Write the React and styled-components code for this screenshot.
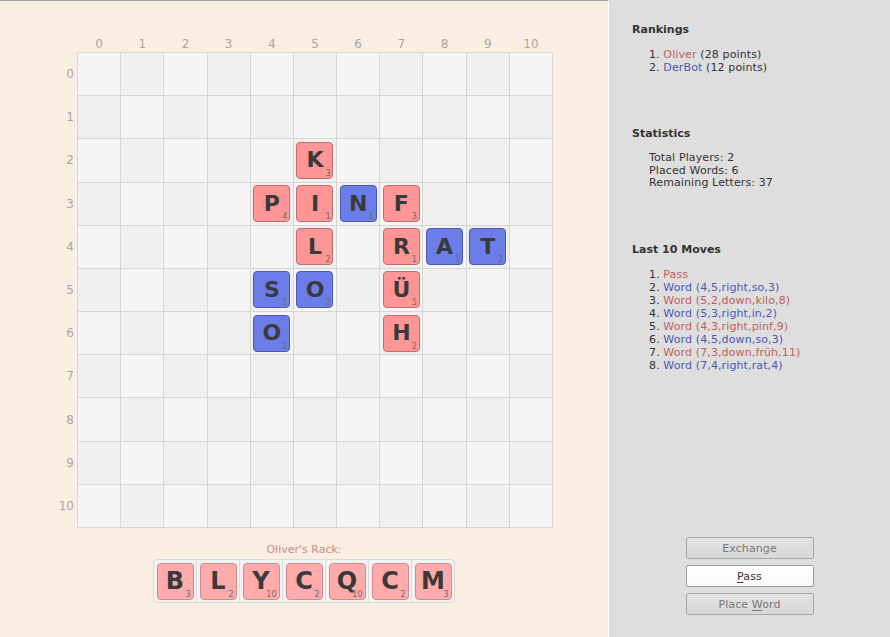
import React from 'react'
import styled, { createGlobalStyle } from 'styled-components'

const GlobalStyle = createGlobalStyle`
  html, body {
    margin: 0;
    padding: 0;
  }
  body {
    font-family: "DejaVu Sans", "Noto Sans", sans-serif;
    font-size: 11px;
    color: #333;
  }
`;

const RED = '#c0605f';
const BLUE = '#4a58b8';

const Window = styled.div`
  display: flex;
  width: 890px;
  height: 637px;
  overflow: hidden;
`;

const GamePanel = styled.div`
  width: 609px;
  box-sizing: border-box;
  background: #faede2;
  border-top: 1px solid #a2a2a2;
  border-right: 1px solid #ffffff;
  padding: 35px 0 0 53px;
  display: flex;
  flex-direction: column;
`;

const BoardFrame = styled.div`
  display: grid;
  grid-template-columns: 24px 476px;
  grid-template-rows: 16px 476px;
`;

const ColLabels = styled.div`
  grid-column: 2;
  display: grid;
  grid-template-columns: repeat(11, 1fr);
  padding: 0 1px;
  gap: 1px;
`;

const AxisLabel = styled.span`
  font-size: 12px;
  line-height: 16px;
  color: #aca59e;
  padding-right: ${p => (p.$row ? '3px' : '0')};
  display: flex;
  align-items: center;
  justify-content: ${p => (p.$row ? 'flex-end' : 'center')};
`;

const RowLabels = styled.div`
  grid-column: 1;
  display: grid;
  grid-template-rows: repeat(11, 1fr);
  padding: 1px 0;
  gap: 1px;
`;

const Board = styled.div`
  display: grid;
  grid-template-columns: repeat(11, 1fr);
  grid-template-rows: repeat(11, 1fr);
  gap: 1px;
  padding: 1px;
  background: #d6d6d6;
`;

const Cell = styled.div`
  background: ${p => (p.$dark ? '#f0f0f0' : '#f5f5f5')};
  display: flex;
  align-items: center;
  justify-content: center;
`;

const Tile = styled.div`
  position: relative;
  width: 37px;
  height: 37px;
  box-sizing: border-box;
  border-radius: 4px;
  border: 1px solid ${p => p.$edge};
  background: ${p => p.$fill};
  display: flex;
  align-items: center;
  justify-content: center;
  font-weight: bold;
  font-size: ${p => p.$size}px;
  color: #3a3a3a;
  padding-bottom: 1px;
`;

const TileValue = styled.span`
  position: absolute;
  right: 2px;
  bottom: 0px;
  font-size: 8px;
  font-weight: normal;
  line-height: 9px;
  color: #6a6a6a;
`;

const RackArea = styled.div`
  margin-left: -53px;
  display: flex;
  flex-direction: column;
  align-items: center;
`;

const RackTitle = styled.div`
  margin-top: 15px;
  font-size: 11px;
  line-height: 14px;
  color: #c98a8a;
`;

const Rack = styled.div`
  margin-top: 2px;
  display: flex;
  background: #f3f3f3;
  border: 1px solid #dadada;
  border-radius: 4px;
`;

const RackSlot = styled.div`
  width: 42px;
  height: 42px;
  display: flex;
  align-items: center;
  justify-content: center;
  & + & {
    border-left: 1px solid #dcdcdc;
  }
`;

const SidePanel = styled.div`
  flex: 1;
  background: #dedede;
  padding: 23px 0 22px 23px;
  display: flex;
  flex-direction: column;
  letter-spacing: 0.12px;
`;

const Section = styled.section`
  & + & {
    margin-top: 53px;
  }
`;

const Heading = styled.h3`
  margin: 0 0 11px;
  font-size: 11px;
  line-height: 14px;
  font-weight: bold;
  color: #333;
  letter-spacing: 0;
`;

const List = styled.div`
  padding-left: 17px;
  line-height: ${p => p.$lh}px;
`;

const Colored = styled.span`
  color: ${p => p.$color};
`;

const Buttons = styled.div`
  margin-top: auto;
  margin-left: -23px;
  display: flex;
  flex-direction: column;
  align-items: center;
  gap: 6px;
`;

const Button = styled.button`
  width: 128px;
  height: 22px;
  box-sizing: border-box;
  font-family: "DejaVu Sans", sans-serif;
  font-size: 11px;
  letter-spacing: 0.12px;
  border-radius: 2px;
  border: 1px solid ${p => (p.$active ? '#9a9a9a' : '#a8a8a8')};
  background: ${p => (p.$active ? 'linear-gradient(#ffffff, #f8f8f8)' : 'linear-gradient(#e2e2e2, #d8d8d8)')};
  color: ${p => (p.$active ? '#333' : '#777')};
  padding: 0;
  u { text-underline-offset: 2px; }
`;

const placed = {
  '5,2': ['K', 3, 'r'], '4,3': ['P', 4, 'r'], '5,3': ['I', 1, 'r'], '6,3': ['N', 1, 'b'],
  '7,3': ['F', 3, 'r'], '5,4': ['L', 2, 'r'], '7,4': ['R', 1, 'r'], '8,4': ['A', 1, 'b'],
  '9,4': ['T', 2, 'b'], '4,5': ['S', 1, 'b'], '5,5': ['O', 2, 'b'], '7,5': ['Ü', 5, 'r'],
  '4,6': ['O', 2, 'b'], '7,6': ['H', 2, 'r'],
};

const rack = [['B', 3], ['L', 2], ['Y', 10], ['C', 2], ['Q', 10], ['C', 2], ['M', 3]];

const moves = [
  ['Pass', RED],
  ['Word (4,5,right,so,3)', BLUE],
  ['Word (5,2,down,kilo,8)', RED],
  ['Word (5,3,right,in,2)', BLUE],
  ['Word (4,3,right,pinf,9)', RED],
  ['Word (4,5,down,so,3)', BLUE],
  ['Word (7,3,down,früh,11)', RED],
  ['Word (7,4,right,rat,4)', BLUE],
];

const tileColors = {
  r: ['#ff9696', '#c46c6c'],
  b: ['#6a7de8', '#4a5ab0'],
  rack: ['#ffabab', '#d48a8a'],
};

const LetterTile = ({ letter, value, kind, size }) => (
  <Tile $fill={tileColors[kind][0]} $edge={tileColors[kind][1]} $size={size}>
    {letter}
    <TileValue>{value}</TileValue>
  </Tile>
);

const idx = [...Array(11).keys()];

export default function App() {
  return (
    <>
      <GlobalStyle />
      <Window>
        <GamePanel>
          <BoardFrame>
            <ColLabels>
              {idx.map(i => <AxisLabel key={i}>{i}</AxisLabel>)}
            </ColLabels>
            <RowLabels>
              {idx.map(i => <AxisLabel key={i} $row>{i}</AxisLabel>)}
            </RowLabels>
            <Board>
              {idx.map(y => idx.map(x => {
                const t = placed[`${x},${y}`];
                return (
                  <Cell key={`${x}-${y}`} $dark={(x + y) % 2 === 1}>
                    {t && <LetterTile letter={t[0]} value={t[1]} kind={t[2]} size={22} />}
                  </Cell>
                );
              }))}
            </Board>
          </BoardFrame>
          <RackArea>
            <RackTitle>Oliver's Rack:</RackTitle>
            <Rack>
              {rack.map(([l, v], i) => (
                <RackSlot key={i}>
                  <LetterTile letter={l} value={v} kind="rack" size={24} />
                </RackSlot>
              ))}
            </Rack>
          </RackArea>
        </GamePanel>
        <SidePanel>
          <Section>
            <Heading>Rankings</Heading>
            <List $lh={13}>
              <div>1. <Colored $color={RED}>Oliver</Colored> (28 points)</div>
              <div>2. <Colored $color={BLUE}>DerBot</Colored> (12 points)</div>
            </List>
          </Section>
          <Section>
            <Heading>Statistics</Heading>
            <List $lh={12.5}>
              <div>Total Players: 2</div>
              <div>Placed Words: 6</div>
              <div>Remaining Letters: 37</div>
            </List>
          </Section>
          <Section>
            <Heading>Last 10 Moves</Heading>
            <List $lh={13}>
              {moves.map(([text, color], i) => (
                <div key={i}>{i + 1}. <Colored $color={color}>{text}</Colored></div>
              ))}
            </List>
          </Section>
          <Buttons>
            <Button>Exchange</Button>
            <Button $active><u>P</u>ass</Button>
            <Button>Place <u>W</u>ord</Button>
          </Buttons>
        </SidePanel>
      </Window>
    </>
  );
}
